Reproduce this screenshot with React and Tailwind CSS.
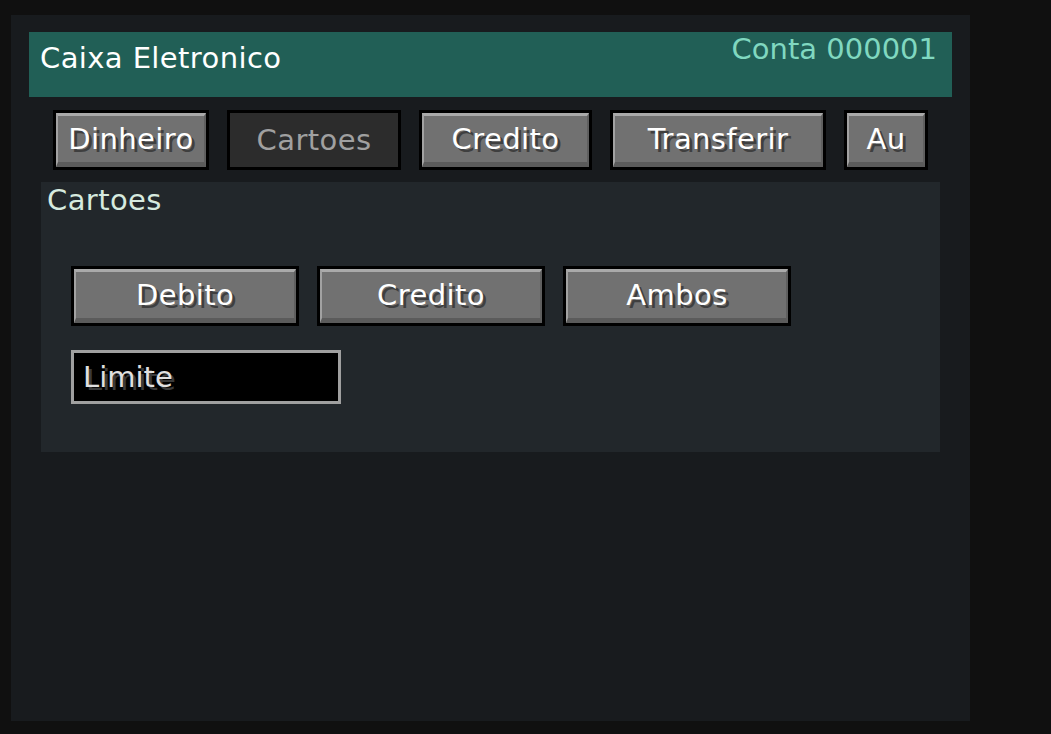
const font = "font-['DejaVu_Sans',sans-serif]";

const tabs = [
  { label: "Dinheiro", w: "w-[156px]" },
  { label: "Cartoes", w: "w-[174px]", active: true },
  { label: "Credito", w: "w-[173px]" },
  { label: "Transferir", w: "w-[216px]" },
  { label: "Au", w: "w-[84px]" },
];

const cardTypes = ["Debito", "Credito", "Ambos"];

// Stone-style button: black frame, bevelled grey face, shadowed label
function BlockButton({ label, w, h = "h-[60px]", disabled }) {
  return (
    <div className={`${w} ${h} shrink-0 border-[3px] border-black bg-black`}>
      {disabled ? (
        <div className="flex h-full w-full items-center justify-center bg-[#2c2c2c] text-[#a0a0a0]">
          <span className="leading-none tracking-[0.4px]">{label}</span>
        </div>
      ) : (
        <div className="flex h-full w-full items-center justify-center border-t-[3px] border-l-[2px] border-r-[2px] border-b-[5px] border-t-[#aaaaaa] border-l-[#a2a2a2] border-r-[#5f5f5f] border-b-[#5b5b5b] bg-[#717171] text-white">
          <span className="leading-none tracking-[0.4px] [text-shadow:3px_3px_0_#3f3f3f]">{label}</span>
        </div>
      )}
    </div>
  );
}

export default function App() {
  return (
    <div className={`h-screen w-full overflow-hidden bg-[#101010] pl-[11px] pt-[15px] ${font} text-[29px]`}>
      <div className="flex h-[706px] w-[959px] flex-col bg-[#181b1e] px-[18px] pt-[17px]">
        {/* header bar */}
        <div className="flex h-[65px] items-start justify-between bg-[#215f56] pl-[11px] pr-[15px]">
          <span className="mt-[12px] leading-none tracking-[0.4px] text-white">Caixa Eletronico</span>
          <span className="mt-[3px] leading-none text-[#80d8c0]">Conta 000001</span>
        </div>

        {/* tab row */}
        <div className="mt-[13px] flex gap-[18px] pl-[24px]">
          {tabs.map((t) => (
            <BlockButton key={t.label} label={t.label} w={t.w} disabled={t.active} />
          ))}
        </div>

        {/* card section */}
        <div className="ml-[12px] mt-[12px] h-[270px] w-[899px] bg-[#22272b] pl-[6px] pt-[4px]">
          <div className="leading-none tracking-[0.4px] text-[#d6eadf]">Cartoes</div>
          <div className="ml-[24px] mt-[51px] flex gap-[18px]">
            {cardTypes.map((c) => (
              <BlockButton key={c} label={c} w="w-[228px]" />
            ))}
          </div>
          <div className="ml-[24px] mt-[24px] flex h-[54px] w-[270px] items-center border-[3px] border-[#a0a0a0] bg-black pl-[9px]">
            <span className="leading-none text-[#e0e0e0] [text-shadow:3px_3px_0_#3a3a3a]">Limite</span>
          </div>
        </div>
      </div>
    </div>
  );
}
